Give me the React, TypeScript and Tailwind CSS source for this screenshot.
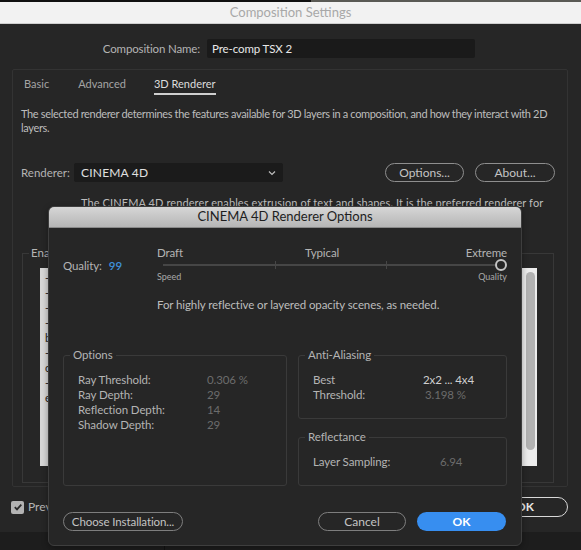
import React from "react";

function Group({
  label,
  className,
  children,
}: {
  label: string;
  className: string;
  children: React.ReactNode;
}) {
  return (
    <fieldset className={"border border-[#3a3a3a] rounded-[3px] " + className}>
      <legend className="ml-[6px] px-[3px] text-[11.5px] tracking-[-0.1px] leading-[14px] text-[#b4b4b4]">{label}</legend>
      {children}
    </fieldset>
  );
}

function Row({ label, value, w, bright }: { label: string; value: string; w: string; bright?: boolean }) {
  return (
    <div className="flex h-[15px] items-center text-[11.5px] tracking-[-0.1px] leading-[15px]">
      <div className={w + " text-[#b4b4b4] whitespace-nowrap"}>{label}</div>
      <div className={bright ? "text-[#cfcfcf]" : "text-[#6c6c6c]"}>{value}</div>
    </div>
  );
}

export default function App() {
  return (
    <div className="relative w-[581px] h-[550px] overflow-hidden bg-[#262626] font-[family-name:Lato,sans-serif] flex flex-col">
      {/* top strip */}
      <div className="h-[2px] flex shrink-0">
        <div className="w-[311px] bg-[#111]" />
        <div className="flex-1 bg-[#5a5a55]" />
      </div>
      {/* title bar */}
      <div className="h-[22px] shrink-0 bg-[#f2f2f2] border-b border-[#cfcfcf] flex items-center justify-center text-[13px] text-[#a8a8a8]">
        Composition Settings
      </div>

      {/* main body */}
      <div className="h-[508px] shrink-0 flex flex-col">
        <div className="mt-[15px] flex items-center h-[19px]">
          <div className="w-[207px] pr-[7px] text-right text-[11.5px] tracking-[-0.15px] text-[#b4b4b4] whitespace-nowrap">Composition Name:</div>
          <div className="w-[268px] h-[19px] bg-[#1a1a1a] rounded-[2px] flex items-center px-[5px] text-[11.5px] tracking-[-0.1px] text-[#e8e8e8]">
            Pre-comp TSX 2
          </div>
        </div>

        {/* tab panel */}
        <div className="mt-[11px] ml-[12px] w-[556px] h-[418px] border border-[#333] rounded-[2px] flex flex-col">
          <div className="pt-[7px] pl-[11px] flex text-[11px] leading-[14px]">
            <span className="text-[#a4a4a4]">Basic</span>
            <span className="ml-[29px] text-[#a4a4a4]">Advanced</span>
            <div className="ml-[28px] flex flex-col">
              <span className="text-[#dcdcdc]">3D Renderer</span>
              <div className="mt-[2px] h-[2px] bg-[#cfcfcf]" />
            </div>
          </div>

          <div className="mt-[12px] pl-[8px] text-[11px] tracking-[-0.34px] leading-[14px] text-[#bdbdbd] whitespace-nowrap">
            <div>The selected renderer determines the features available for 3D layers in a composition, and how they interact with 2D</div>
            <div>layers.</div>
          </div>

          <div className="mt-[28px] pl-[8px] pr-[12px] flex items-center h-[19px]">
            <span className="text-[11.5px] text-[#b4b4b4] w-[53px]">Renderer:</span>
            <div className="w-[209px] h-[19px] bg-[#1b1b1b] rounded-[2px] flex items-center pl-[7px] pr-[6px] text-[12px] tracking-[0.2px] text-[#e0e0e0]">
              <span className="flex-1">CINEMA 4D</span>
              <svg width="8" height="6" viewBox="0 0 8 6" className="mr-[1px]">
                <polyline points="1,1.5 4,4.5 7,1.5" fill="none" stroke="#bdbdbd" strokeWidth="1.2" />
              </svg>
            </div>
            <div className="ml-auto flex gap-[11px]">
              <div className="w-[79px] h-[19px] rounded-full border-[1.5px] border-[#8e8e8e] flex items-center justify-center text-[12px] text-[#c4c4c4]">
                Options...
              </div>
              <div className="w-[80px] h-[19px] rounded-full border-[1.5px] border-[#8e8e8e] flex items-center justify-center text-[12px] text-[#c4c4c4]">
                About...
              </div>
            </div>
          </div>

          <div className="mt-[14px] pl-[68px] h-[28px] text-[11px] tracking-[0.1px] leading-[14px] text-[#bdbdbd] whitespace-nowrap">
            <div>The CINEMA 4D renderer enables extrusion of text and shapes. It is the preferred renderer for</div>
          </div>

          <fieldset className="mt-[22px] ml-[9px] mr-[13px] h-[237px] border border-[#383838] flex flex-col">
            <legend className="ml-[6px] px-[2px] text-[11.5px] leading-[14px] text-[#b4b4b4]">Ena</legend>
            <div className="mt-[8px] ml-[17px] mr-[16px] h-[198px] flex">
              <div className="flex-1 bg-[#d6d6d6] pl-[5px] pt-[2px] text-[11px] leading-[15px] text-[#222] whitespace-nowrap overflow-hidden">
                <div>-</div>
                <div>-</div>
                <div>-</div>
                <div>-</div>
                <div>b</div>
                <div>-</div>
                <div>c</div>
                <div>-</div>
                <div>e</div>
              </div>
              <div className="w-[15px] bg-[#ececec] pt-[4px] pl-[4px]">
                <div className="w-[9px] h-[178px] rounded-full bg-[#b2b2b2]" />
              </div>
            </div>
          </fieldset>
        </div>

        {/* bottom row */}
        <div className="mt-[10px] h-[20px] flex items-center pl-[11px] pr-[13px]">
          <div className="w-[13px] h-[13px] rounded-[2px] bg-[#b3b3b3] flex items-center justify-center">
            <svg width="10" height="10" viewBox="0 0 10 10">
              <polyline points="1.8,5.2 4,7.4 8.3,2.6" fill="none" stroke="#2a2a2a" strokeWidth="1.8" />
            </svg>
          </div>
          <span className="ml-[4px] text-[12px] text-[#b4b4b4]">Prev</span>
          <div className="ml-auto w-[86px] h-[20px] rounded-full border-[1.5px] border-[#d8d8d8] flex items-center justify-center text-[12px] font-bold text-[#e6e6e6]">
            OK
          </div>
        </div>
      </div>

      {/* app behind */}
      <div className="flex-1 bg-[#1d1d1d] flex">
        <div className="w-[165px] border-r border-[#121212]" />
      </div>

      {/* CINEMA 4D Renderer Options dialog */}
      <div className="absolute left-[48px] top-[206px] w-[474px] h-[340px] rounded-[6px] border border-[#3e3e3e] bg-[#262626] shadow-[0_2px_6px_rgba(0,0,0,0.35)] flex flex-col overflow-hidden">
        <div className="h-[21px] shrink-0 bg-gradient-to-b from-[#d6d6d6] to-[#b6b6b6] border-b border-[#8a8a8a] flex items-center justify-center text-[13px] text-[#1e1e1e]">
          CINEMA 4D Renderer Options
        </div>
        <div className="flex-1 px-[14px] pt-[18px] flex flex-col">
          <div className="flex">
            <div className="w-[94px] pt-[13px] flex text-[11.5px] tracking-[-0.1px] leading-[14px]">
              <span className="text-[#b4b4b4]">Quality:</span>
              <span className="ml-[7px] font-semibold text-[#3f8fd8]">99</span>
            </div>
            <div className="w-[350px] flex flex-col">
              <div className="grid grid-cols-[148px_1fr_auto] text-[11.5px] tracking-[-0.1px] leading-[14px] text-[#b4b4b4]">
                <span>Draft</span>
                <span>Typical</span>
                <span>Extreme</span>
              </div>
              <div className="-mt-[1px] h-[12px] pl-[6px] flex items-center">
                <div className="w-[112px] h-[2px] bg-[#464646]" />
                <div className="w-[1px] h-[8px] bg-[#464646]" />
                <div className="w-[110px] h-[2px] bg-[#464646]" />
                <div className="w-[1px] h-[8px] bg-[#464646]" />
                <div className="flex-1 h-[2px] bg-[#464646]" />
                <div className="w-[12px] h-[12px] rounded-full border-[2px] border-[#c4c4c4]" />
              </div>
              <div className="mt-[1px] flex justify-between text-[9px] leading-[10px] text-[#a8a8a8]">
                <span>Speed</span>
                <span>Quality</span>
              </div>
              <div className="mt-[16px] text-[11.5px] tracking-[-0.1px] leading-[14px] text-[#bdbdbd] whitespace-nowrap">
                For highly reflective or layered opacity scenes, as needed.
              </div>
            </div>
          </div>

          <div className="mt-[36px] flex gap-[11px]">
            <Group label="Options" className="w-[224px] h-[138px]">
              <div className="pl-[14px] pt-[10px]">
                <Row label="Ray Threshold:" value="0.306 %" w="w-[129px]" />
                <Row label="Ray Depth:" value="29" w="w-[129px]" />
                <Row label="Reflection Depth:" value="14" w="w-[129px]" />
                <Row label="Shadow Depth:" value="29" w="w-[129px]" />
              </div>
            </Group>
            <div className="w-[209px] flex flex-col gap-[11px]">
              <Group label="Anti-Aliasing" className="h-[71px]">
                <div className="pl-[14px] pt-[10px]">
                  <Row label="Best" value="2x2 ... 4x4" w="w-[110px]" bright />
                  <Row label="Threshold:" value="3.198 %" w="w-[112px]" />
                </div>
              </Group>
              <Group label="Reflectance" className="h-[56px]">
                <div className="pl-[14px] pt-[10px]">
                  <Row label="Layer Sampling:" value="6.94" w="w-[127px]" />
                </div>
              </Group>
            </div>
          </div>

          <div className="mt-[26px] flex items-center">
            <div className="w-[120px] h-[19px] rounded-full border-[1.5px] border-[#7e7e7e] flex items-center justify-center text-[11.5px] tracking-[-0.1px] text-[#c4c4c4] whitespace-nowrap">
              Choose Installation...
            </div>
            <div className="ml-auto w-[88px] h-[19px] rounded-full border-[1.5px] border-[#7e7e7e] flex items-center justify-center text-[12px] text-[#c4c4c4]">
              Cancel
            </div>
            <div className="ml-[11px] mr-[1px] w-[89px] h-[19px] rounded-full bg-[#378ef0] flex items-center justify-center text-[12px] font-bold text-white">
              OK
            </div>
          </div>
        </div>
      </div>
    </div>
  );
}
